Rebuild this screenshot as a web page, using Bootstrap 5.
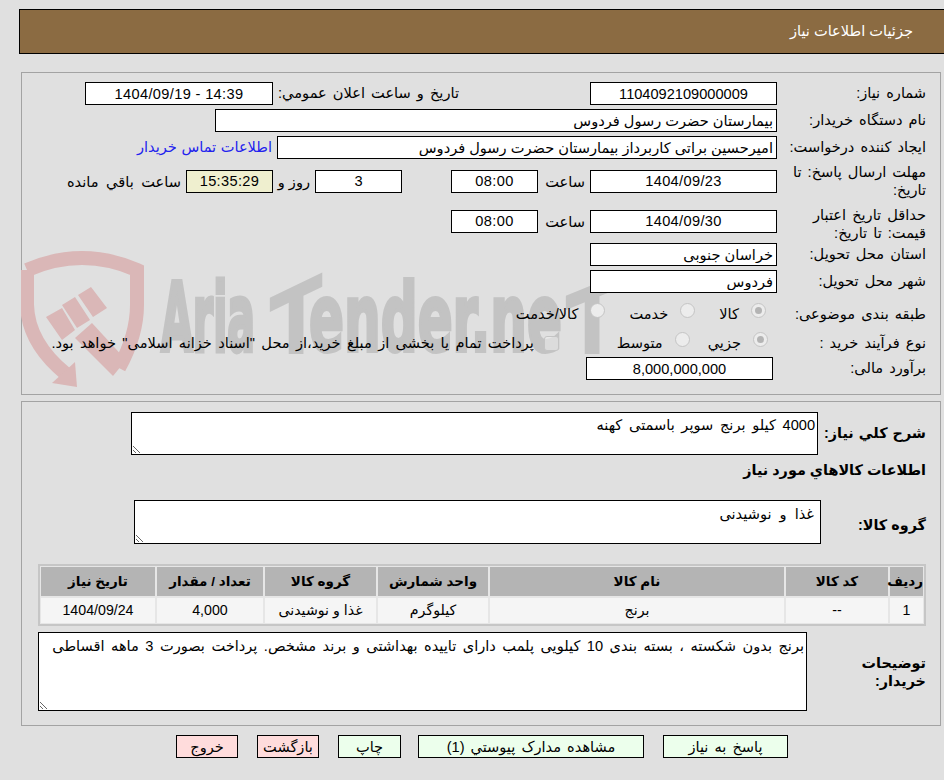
<!DOCTYPE html>
<html lang="fa" dir="rtl">
<head>
<meta charset="utf-8">
<title>جزئیات اطلاعات نیاز</title>
<link href="https://cdn.jsdelivr.net/npm/bootstrap@5.3.0/dist/css/bootstrap.min.css" rel="stylesheet">
<style>
html,body{height:780px;overflow:hidden}
body{background:#e0e0e0;color:#000;font-family:"Liberation Sans","DejaVu Sans",sans-serif;font-size:14.6px;line-height:1.2}
.page-head{background:#8b6b42;border:1px solid #000;border-right:0;height:45px;margin:9px 0 0 19px;padding-right:31px;color:#fff;display:flex;align-items:center}
.sheet{border:1px solid #a3a3a3;margin-left:21px;margin-right:3px;position:relative}
.sheet-a{margin-top:18px;height:323px;padding:9px 14px 0 0}
.sheet-b{margin-top:6px;height:325px;padding:10px 14px 0 14px}
.wmark{position:absolute;left:-1px;top:177px;z-index:0;pointer-events:none}
.line{position:relative;z-index:1;display:flex;align-items:center;min-height:23px;margin-bottom:4px}
.lab{width:149px;flex:none;padding-left:5px;word-spacing:2px}
.form-control.fld{border:1px solid #000;border-radius:0;background:#fff;color:#000;height:23px;min-height:0;padding:0 3px;font-size:14.6px;line-height:21px;flex:none;box-shadow:none}
.ctr{text-align:center}
.form-control.dt{letter-spacing:.35px}
.w187{width:187px}.w87{width:87px}.w188{width:188px}
.gap5{margin-right:5px}
.bluelink{color:#2222ee;text-decoration:none;margin-right:5px;word-spacing:.5px}
.form-control.clock{background:#efefcf}
.rad{display:inline-block;width:15px;height:15px;border-radius:50%;border:1px solid #c4c4c4;background:#ececec;flex:none;position:relative;margin-top:-8px}
.rad.on::after{content:"";position:absolute;left:3px;top:3px;width:7px;height:7px;border-radius:50%;background:#b4b4b4}
.chk{display:inline-block;width:15px;height:15px;border-radius:3px;border:1px solid #c4c4c4;background:rgba(236,236,236,.6);flex:none}
.blab{font-weight:700;font-size:14.4px}
.ta{resize:both;overflow:auto;display:block;flex:none;font-size:14.6px;line-height:19px;word-spacing:2.6px}
.form-control.tafld{border:1px solid #000;border-radius:0;background:#fff;color:#000;box-shadow:none;min-height:0}
.form-control.ta1{width:687px;height:43px;padding:3px 2px 0}
.form-control.ta2{width:687px;height:44px;padding:4px 6px 0 2px;word-spacing:4px}
.form-control.ta3{width:769px;height:79px;padding:4px 2px 0;word-spacing:2.4px}
.tbl-wrap{width:888px;border:2px solid #c6c6c6;margin:0 0 6px;background:#e6e6e6}
table.table.need{margin:-1px;border-collapse:separate;border-spacing:2px;--bs-table-bg:transparent;table-layout:fixed;width:886px}
.need th,.need td{border:0;text-align:center;vertical-align:middle;padding:0;color:#000;font-size:14.2px}
.need th{background:#b4b4b4;height:29px;font-size:13.5px;font-weight:700}
.need td{background:#f5f5f5;height:25px}
.c33{width:33px}.c102{width:102px}.c294{width:294px}.c110{width:110px}.c111{width:111px}.c106{width:106px}
.foot-btns{display:flex;justify-content:flex-start;margin:9px 156px 0 0}
.btn.act{border:1px solid #000;border-radius:0;height:23px;padding:1px 0 0;color:#000;font-size:14.6px;line-height:21px;margin-left:19px;word-spacing:2px}
.act-ok{background:#ecffec}
.act-no{background:#ffdcdc}
.lab-pub{margin-right:131px;width:181px;flex:none;word-spacing:2px;white-space:nowrap}
.sp52{width:52px;flex:none;padding:3px 5px 0 0;white-space:nowrap}
.gap-big{margin-right:49px}
.sp42{width:42px;flex:none;padding:3px 5px 0 0;white-space:nowrap}
.remain{margin-right:5px;padding-top:3px;word-spacing:3.5px}
.l-dead .lab,.l-min .lab{line-height:18px}
.l-min .lab{padding-top:3px;margin-bottom:-3px}
.bud{width:187px;margin-right:4px}
.l-r1{margin:10px 0 6px}
.l-r2{margin-bottom:2px}
.r1a{margin-right:11px}
.tx1{margin-right:12px}
.r1b{margin-right:24px}
.r2a{margin-right:9px}
.r2b{margin-right:18px}
.tx2{margin-right:12px;word-spacing:1px}
.c1{margin-right:58px}
.o2{margin-right:10px;word-spacing:2.3px;white-space:nowrap}
.lb1{width:108px;flex:none;word-spacing:1px}
.l-t1{margin-bottom:7px;min-height:43px}
.h-goods{margin-bottom:21px}
.lb2{width:105px;flex:none;padding-top:3px;margin-bottom:-3px}
.l-t2{margin-bottom:20px;min-height:44px}
.lb3{width:119px;flex:none;line-height:18px}
.l-t3{min-height:79px}
.b1{width:125px}.b2{width:226px}.b3{width:63px}.b4{width:62px}
.btn.b2{margin-left:17px}
</style>
</head>
<body>
<div class="page-head">جزئیات اطلاعات نیاز</div>

<div class="sheet sheet-a">
  <svg class="wmark" width="640" height="145" viewBox="0 0 640 145" aria-hidden="true">
    <defs><clipPath id="wclip"><rect x="0" y="0" width="700" height="354"/></clipPath></defs>
    <g transform="translate(-21,-250)">
      <path d="M27 270 Q82 246 137 270 V305 Q137 335 119 368" fill="none" stroke="#dab7b7" stroke-width="14"/>
      <path d="M27 270 V305 Q28 343 66 374" fill="none" stroke="#dab7b7" stroke-width="14"/>
      <path d="M75 362 L77 387 L52 383 Z" fill="#dab7b7"/>
      <path d="M46 317 L62 308 L75 330 L62 340 Z M62 305 L75 297 L90 320 L77 328 Z M78 295 L91 287 L107 308 L93 317 Z" fill="#dab7b7"/>
      <path d="M75 338 L92 323 L126 360 L113 376 Z" fill="#dab7b7"/>
      <g fill="#c3c3c3" stroke="#c3c3c3" font-family="'DejaVu Sans',sans-serif" font-weight="700" direction="ltr">
        <text x="161" y="351" font-size="95" textLength="94" lengthAdjust="spacingAndGlyphs" stroke-width="5" direction="ltr">Aria</text>
        <text x="309" y="351" font-size="95" textLength="253" lengthAdjust="spacingAndGlyphs" stroke-width="4" direction="ltr">ender.ne</text>
        <g clip-path="url(#wclip)" stroke="none">
          <text transform="translate(296,358) skewY(-25.6) scale(.78,1)" font-size="100" text-anchor="middle" direction="ltr">T</text>
          <text transform="translate(592,358) skewY(-22) scale(.78,1)" font-size="100" text-anchor="middle" direction="ltr">T</text>
        </g>
      </g>
    </g>
  </svg>

  <div class="line">
    <div class="lab">شماره نیاز:</div>
    <input class="form-control fld ctr w187" readonly value="1104092109000009">
    <div class="lab-pub">تاریخ و ساعت اعلان عمومي:</div>
    <input class="form-control fld ctr dt w188 gap5" readonly value="1404/09/19 - 14:39" dir="ltr">
  </div>
  <div class="line">
    <div class="lab">نام دستگاه خریدار:</div>
    <input class="form-control fld" style="width:562px" readonly value="بیمارستان حضرت رسول فردوس">
  </div>
  <div class="line">
    <div class="lab">ایجاد کننده درخواست:</div>
    <input class="form-control fld" style="width:500px" readonly value="امیرحسین براتی کاربرداز بیمارستان حضرت رسول فردوس">
    <a class="bluelink" href="#">اطلاعات تماس خریدار</a>
  </div>
  <div class="line l-dead">
    <div class="lab">مهلت ارسال پاسخ: تا تاریخ:</div>
    <input class="form-control fld ctr dt w187" readonly value="1404/09/23">
    <span class="sp52">ساعت</span>
    <input class="form-control fld ctr dt w87" readonly value="08:00">
    <input class="form-control fld ctr w87 gap-big" readonly value="3">
    <span class="sp42">روز و</span>
    <input class="form-control fld ctr dt w87 clock" readonly value="15:35:29">
    <span class="remain">ساعت باقي مانده</span>
  </div>
  <div class="line l-min">
    <div class="lab">حداقل تاریخ اعتبار قیمت: تا تاریخ:</div>
    <input class="form-control fld ctr dt w187" readonly value="1404/09/30">
    <span class="sp52">ساعت</span>
    <input class="form-control fld ctr dt w87" readonly value="08:00">
  </div>
  <div class="line">
    <div class="lab">استان محل تحویل:</div>
    <input class="form-control fld w187" readonly value="خراسان جنوبی">
  </div>
  <div class="line">
    <div class="lab">شهر محل تحویل:</div>
    <input class="form-control fld w187" readonly value="فردوس">
  </div>
  <div class="line l-r1">
    <div class="lab">طبقه بندی موضوعی:</div>
    <span class="rad on r1a"></span><span class="tx1">کالا</span>
    <span class="rad r1b"></span><span class="tx1">خدمت</span>
    <span class="rad r1b"></span><span class="tx1">کالا/خدمت</span>
  </div>
  <div class="line l-r2">
    <div class="lab">نوع فرآیند خرید :</div>
    <span class="rad on r2a"></span><span class="tx2">جزيي</span>
    <span class="rad r2b"></span><span class="tx2">متوسط</span>
    <span class="chk c1"></span><span class="o2">پرداخت تمام یا بخشی از مبلغ خرید،از محل "اسناد خزانه اسلامی" خواهد بود.</span>
  </div>
  <div class="line">
    <div class="lab">برآورد مالی:</div>
    <input class="form-control fld ctr bud" readonly value="8,000,000,000">
  </div>
</div>

<div class="sheet sheet-b">
  <div class="line l-t1">
    <div class="blab lb1">شرح کلي نیاز:</div>
    <textarea class="form-control tafld ta ta1" readonly>4000 کیلو برنج سوپر باسمتی کهنه</textarea>
  </div>
  <div class="blab h-goods">اطلاعات کالاهاي مورد نیاز</div>
  <div class="line l-t2">
    <div class="blab lb2">گروه کالا:</div>
    <textarea class="form-control tafld ta ta2" readonly>غذا و نوشیدنی</textarea>
  </div>
  <div class="tbl-wrap">
    <table class="table need">
      <colgroup><col class="c33"><col class="c102"><col class="c294"><col class="c110"><col class="c111"><col class="c106"><col></colgroup>
      <thead><tr><th>ردیف</th><th>کد کالا</th><th>نام کالا</th><th>واحد شمارش</th><th>گروه کالا</th><th>تعداد / مقدار</th><th>تاریخ نیاز</th></tr></thead>
      <tbody><tr><td>1</td><td>--</td><td>برنج</td><td>کیلوگرم</td><td>غذا و نوشیدنی</td><td>4,000</td><td>1404/09/24</td></tr></tbody>
    </table>
  </div>
  <div class="line l-t3">
    <div class="blab lb3">توضیحات خریدار:</div>
    <textarea class="form-control tafld ta ta3" readonly>برنج بدون شکسته ، بسته بندی 10 کیلویی پلمب دارای تاییده بهداشتی و برند مشخص. پرداخت بصورت 3 ماهه اقساطی</textarea>
  </div>
</div>

<div class="foot-btns">
  <button type="button" class="btn act act-ok b1">پاسخ به نیاز</button>
  <button type="button" class="btn act act-ok b2">مشاهده مدارک پیوستي (1)</button>
  <button type="button" class="btn act act-ok b3">چاپ</button>
  <button type="button" class="btn act act-no b4">بازگشت</button>
  <button type="button" class="btn act act-no b4">خروج</button>
</div>
</body>
</html>
